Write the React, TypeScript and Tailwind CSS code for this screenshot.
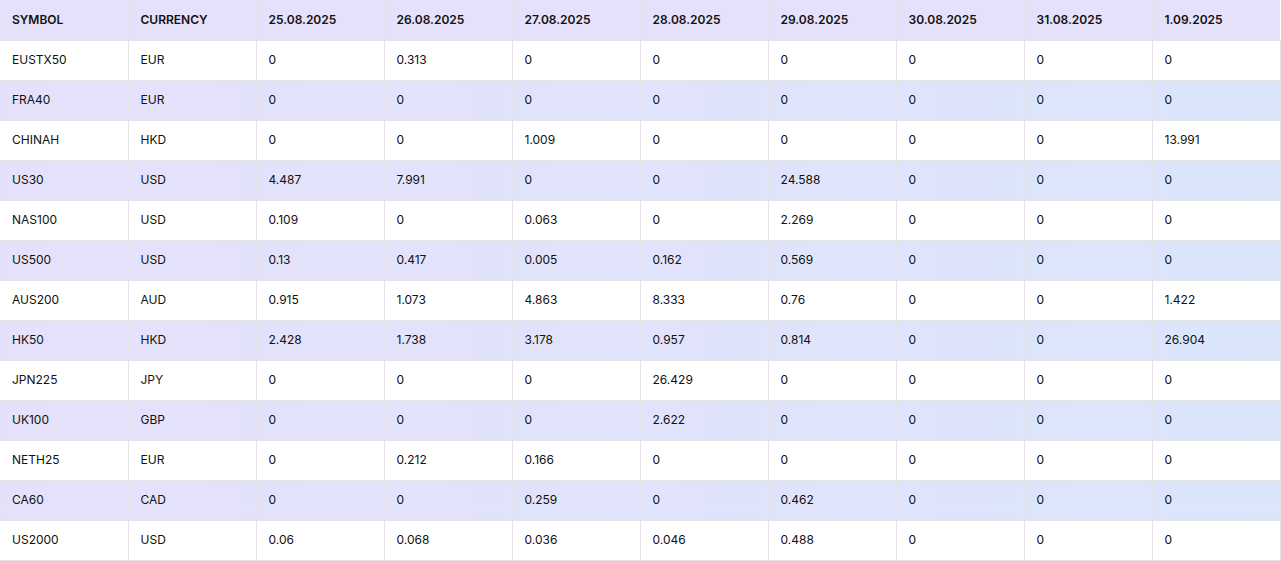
const head = ["SYMBOL","CURRENCY","25.08.2025","26.08.2025","27.08.2025","28.08.2025","29.08.2025","30.08.2025","31.08.2025","1.09.2025"];
const rows = [
["EUSTX50","EUR","0","0.313","0","0","0","0","0","0"],
["FRA40","EUR","0","0","0","0","0","0","0","0"],
["CHINAH","HKD","0","0","1.009","0","0","0","0","13.991"],
["US30","USD","4.487","7.991","0","0","24.588","0","0","0"],
["NAS100","USD","0.109","0","0.063","0","2.269","0","0","0"],
["US500","USD","0.13","0.417","0.005","0.162","0.569","0","0","0"],
["AUS200","AUD","0.915","1.073","4.863","8.333","0.76","0","0","1.422"],
["HK50","HKD","2.428","1.738","3.178","0.957","0.814","0","0","26.904"],
["JPN225","JPY","0","0","0","26.429","0","0","0","0"],
["UK100","GBP","0","0","0","2.622","0","0","0","0"],
["NETH25","EUR","0","0.212","0.166","0","0","0","0","0"],
["CA60","CAD","0","0","0.259","0","0.462","0","0","0"],
["US2000","USD","0.06","0.068","0.036","0.046","0.488","0","0","0"],
];
export default function App() {
  return (
    <div className="w-[1281px] bg-white" style={{fontFamily:"Inter, 'Liberation Sans', sans-serif"}}>
      <table className="w-[1280px] table-fixed border-collapse text-[12px] text-[#111]">
        <thead>
          <tr className="h-[40px] bg-[#e6e1fb]">
            {head.map((h,i)=>(
              <th key={i} className="w-[128px] px-3 text-left font-semibold border-r border-b border-[#e2e2e8] last:border-r-0">{h}</th>
            ))}
          </tr>
        </thead>
        <tbody>
          {rows.map((r,ri)=>(
            <tr key={ri} className={"h-[40px] " + (ri%2===1 ? "bg-gradient-to-r from-[#e6e1fb] to-[#dbe6fb]" : "bg-white")}>
              {r.map((c,ci)=>(
                <td key={ci} className="px-3 border-r border-b border-[#e4e4e8] last:border-r-[#e4e4e8]">{c}</td>
              ))}
            </tr>
          ))}
        </tbody>
      </table>
    </div>
  );
}
